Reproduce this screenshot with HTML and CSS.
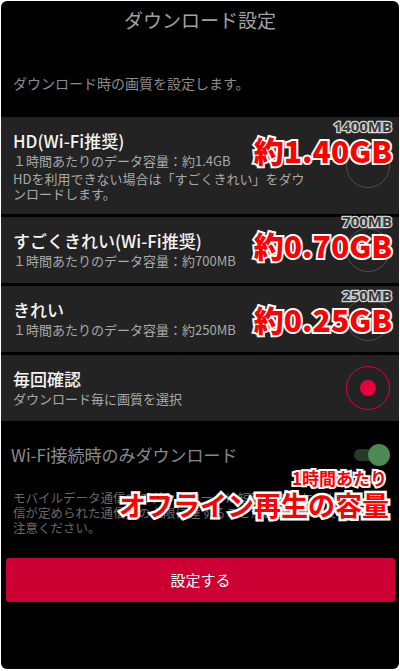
FILE: index.html
```html
<!DOCTYPE html>
<html lang="ja">
<head>
<meta charset="utf-8">
<link rel="stylesheet" href="styles.css">
</head>
<body>
<div class="frame">
  <h1 class="title">ダウンロード設定</h1>
  <p class="lead">ダウンロード時の画質を設定します。</p>

  <div class="cards">
    <div class="card">
      <div class="card-text">
        <div class="card-title">HD(Wi-Fi推奨)</div>
        <div class="card-sub">１時間あたりのデータ容量：約1.4GB</div>
        <div class="card-note">HDを利用できない場合は「すごくきれい」をダウ<br>ンロードします。</div>
      </div>
      <span class="radio"></span>
      <div class="note note-1">
        <span class="note-mb">1400MB</span>
        <span class="note-gb">約1.40GB</span>
      </div>
    </div>

    <div class="card">
      <div class="card-text">
        <div class="card-title">すごくきれい(Wi-Fi推奨)</div>
        <div class="card-sub">１時間あたりのデータ容量：約700MB</div>
      </div>
      <span class="radio"></span>
      <div class="note note-2">
        <span class="note-mb">700MB</span>
        <span class="note-gb">約0.70GB</span>
      </div>
    </div>

    <div class="card">
      <div class="card-text">
        <div class="card-title">きれい</div>
        <div class="card-sub">１時間あたりのデータ容量：約250MB</div>
      </div>
      <span class="radio"></span>
      <div class="note note-3">
        <span class="note-mb">250MB</span>
        <span class="note-gb">約0.25GB</span>
      </div>
    </div>

    <div class="card">
      <div class="card-text">
        <div class="card-title">毎回確認</div>
        <div class="card-sub">ダウンロード毎に画質を選択</div>
      </div>
      <span class="radio radio-on"><span class="radio-dot"></span></span>
    </div>
  </div>

  <div class="wifi">
    <div class="wifi-row">
      <span class="wifi-label">Wi-Fi接続時のみダウンロード</span>
      <span class="toggle"><span class="toggle-thumb"></span></span>
    </div>
    <p class="wifi-desc">モバイルデータ通信でのダウンロードは短時間でパケット通<br>信が定められた通信量の上限に達することがありますのでご<br>注意ください。</p>
    <div class="caption">
      <span class="caption-small">1時間あたり</span>
      <span class="caption-big">オフライン再生の容量</span>
    </div>
  </div>

  <button class="submit" type="button">設定する</button>
</div>
</body>
</html>
```

FILE: styles.css
```css
html, body {
  margin: 0;
  padding: 0;
  background: #ffffff;
}

body {
  font-family: "Noto Sans CJK JP", "Noto Sans", sans-serif;
}

.frame {
  position: relative;
  margin: 1px;
  height: 668px;
  background: #000000;
  border-radius: 6px;
  overflow: hidden;
  display: flex;
  flex-direction: column;
}

.title {
  margin: 0;
  font-size: 19px;
  font-weight: 400;
  line-height: 38px;
  text-align: center;
  color: #a2a2a2;
}

.lead {
  margin: 34px 0 0;
  padding: 0 12px;
  font-size: 14px;
  line-height: 20px;
  color: #8c8c8c;
}

.cards {
  margin-top: 24px;
  display: flex;
  flex-direction: column;
  gap: 3px;
}

.card {
  position: relative;
  display: flex;
  align-items: center;
  justify-content: space-between;
  padding: 13px 9px 13px 12px;
  background: #232323;
}

.card-title {
  font-size: 17px;
  font-weight: 500;
  line-height: 22px;
  color: #f4f4f4;
}

.card-sub {
  font-size: 13px;
  line-height: 18px;
  color: #a9a9a9;
}

.card-note {
  margin-top: 1px;
  font-size: 13px;
  line-height: 15px;
  color: #a9a9a9;
}

.radio {
  flex: none;
  box-sizing: border-box;
  width: 44px;
  height: 44px;
  margin: -6px 0;
  border-radius: 50%;
  border: 1.5px solid #4e4e4e;
  display: flex;
  align-items: center;
  justify-content: center;
}

.radio-on {
  border-color: #e3003b;
}

.radio-dot {
  width: 16px;
  height: 16px;
  border-radius: 50%;
  background: #e8003e;
}

.note {
  position: absolute;
  right: 7px;
  display: flex;
  flex-direction: column;
  align-items: flex-end;
}

.note-1 { top: 2px; }
.note-2 { top: -3px; }
.note-3 { top: 2px; }

.note-mb {
  font-family: "Noto Sans", "Liberation Sans", sans-serif;
  font-size: 15px;
  font-weight: 700;
  line-height: 15px;
  color: #3a3a3a;
  -webkit-text-stroke: 2.5px #d8d8d8;
  paint-order: stroke fill;
}

.note-gb {
  font-size: 30px;
  font-weight: 900;
  line-height: 32px;
  color: #ff0000;
  -webkit-text-stroke: 4px #ffffff;
  paint-order: stroke fill;
}

.wifi {
  position: relative;
  margin-top: 22px;
  padding: 0 10px;
}

.wifi-row {
  display: flex;
  align-items: center;
  justify-content: space-between;
  height: 24px;
}

.wifi-label {
  font-size: 17px;
  line-height: 24px;
  color: #8a8a8a;
}

.toggle {
  position: relative;
  width: 34px;
  height: 12px;
  margin-right: 1px;
  border-radius: 6px;
  background: #253b27;
}

.toggle-thumb {
  position: absolute;
  right: -2px;
  top: -5px;
  width: 22px;
  height: 22px;
  border-radius: 50%;
  background: #4b8a50;
}

.wifi-desc {
  margin: 23px 0 0;
  padding-left: 2px;
  font-size: 12.5px;
  line-height: 15px;
  color: #6a6a6a;
}

.caption {
  position: absolute;
  right: 10px;
  top: 25px;
  display: flex;
  flex-direction: column;
  align-items: flex-end;
}

.caption-small {
  font-size: 17px;
  font-weight: 700;
  line-height: 20px;
  margin-right: 2px;
  color: #ff0000;
  -webkit-text-stroke: 4px #ffffff;
  paint-order: stroke fill;
}

.caption-big {
  font-size: 27px;
  font-weight: 700;
  line-height: 34px;
  color: #ff0000;
  -webkit-text-stroke: 5px #ffffff;
  paint-order: stroke fill;
}

.submit {
  margin: 23px 4px 0 5px;
  height: 44px;
  border: none;
  border-radius: 3px;
  background: #cc0033;
  color: #ffffff;
  font-family: "Noto Sans CJK JP", "Noto Sans", sans-serif;
  font-size: 15px;
  line-height: 44px;
  padding: 0;
}
```
